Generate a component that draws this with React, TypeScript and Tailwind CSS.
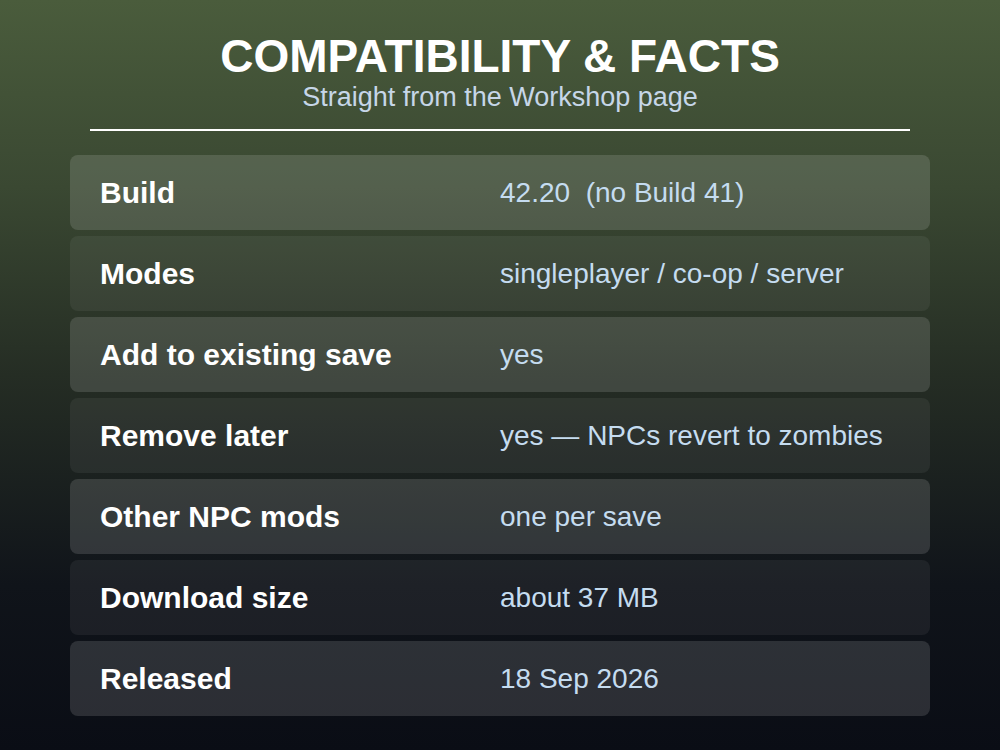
const rows = [
  { label: "Build", value: "42.20\u00a0\u00a0(no Build 41)" },
  { label: "Modes", value: "singleplayer / co-op / server" },
  { label: "Add to existing save", value: "yes" },
  { label: "Remove later", value: "yes — NPCs revert to zombies" },
  { label: "Other NPC mods", value: "one per save" },
  { label: "Download size", value: "about 37 MB" },
  { label: "Released", value: "18 Sep 2026" },
];

export default function App() {
  return (
    <main className="h-[750px] w-[1000px] overflow-hidden bg-[linear-gradient(180deg,#4a5c3c_0%,#3a4832_25%,#252d24_50%,#10141a_78%,#0a0d15_100%)] font-['Liberation_Sans',Arial,sans-serif]">
      <header className="flex flex-col items-center pt-[30px]">
        <h1 className="text-[46px] font-bold leading-[52px] text-white">COMPATIBILITY &amp; FACTS</h1>
        <p className="text-[27px] leading-[30px] text-[#c6d6e8]">Straight from the Workshop page</p>
      </header>
      <div className="mx-[90px] mt-[17px] h-[2px] bg-white" />
      <div className="mx-[70px] mt-[24px] flex flex-col gap-[6px]">
        {rows.map((row, i) => (
          <div
            key={row.label}
            className={
              "flex h-[75px] items-center rounded-[8px] px-[30px] " +
              (i % 2 === 0 ? "bg-white/[0.13]" : "bg-white/[0.06]")
            }
          >
            <div className="w-[400px] text-[30px] font-bold text-white">{row.label}</div>
            <div className="text-[28px] text-[#c5dcf0]">{row.value}</div>
          </div>
        ))}
      </div>
    </main>
  );
}
